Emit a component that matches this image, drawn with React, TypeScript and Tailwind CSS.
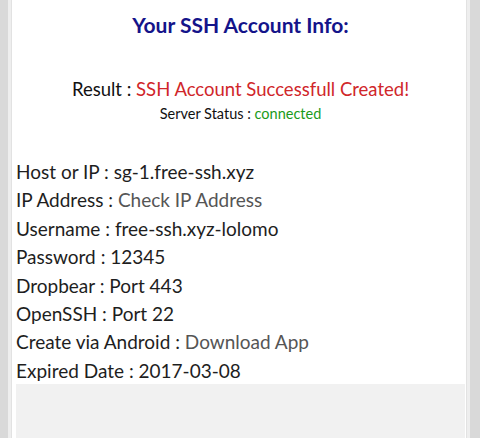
const rows: { label: string; value: string; link?: boolean }[] = [
  { label: "Host or IP", value: "sg-1.free-ssh.xyz" },
  { label: "IP Address", value: "Check IP Address", link: true },
  { label: "Username", value: "free-ssh.xyz-lolomo" },
  { label: "Password", value: "12345" },
  { label: "Dropbear", value: "Port 443" },
  { label: "OpenSSH", value: "Port 22" },
  { label: "Create via Android", value: "Download App", link: true },
  { label: "Expired Date", value: "2017-03-08" },
];

export default function App() {
  return (
    <div className="h-[438px] w-[480px] overflow-hidden bg-[#d9d9d9] pl-[8px] pr-[10px] font-['Lato',sans-serif]">
      <div className="h-full border-x-[3px] border-[#eeeeee]">
        <div className="h-full border-x border-[#e2e2e2] bg-white pl-[4px] pr-[1px]">
          <h1 className="pt-[10px] text-center text-[21px] font-bold leading-[30px] text-[#14148a]">
            Your SSH Account Info:
          </h1>
          <div className="mt-[36px] text-center text-[18.5px] leading-[26px] text-[#111111]">
            Result : <span className="text-[#d0262a]">SSH Account Successfull Created!</span>
          </div>
          <div className="text-center text-[14.5px] leading-[24px] text-[#111111]">
            Server Status : <span className="text-[#1a9a1a]">connected</span>
          </div>
          <div className="mt-[32px] flex flex-col">
            {rows.map((r) => (
              <div key={r.label} className="whitespace-nowrap text-[19px] leading-[28.4px] text-[#1e1e1e]">
                {r.label} : <span className={r.link ? "text-[#555555]" : ""}>{r.value}</span>
              </div>
            ))}
          </div>
          <div className="-mt-[1px] h-[60px] bg-[#f1f1f1]" />
        </div>
      </div>
    </div>
  );
}
